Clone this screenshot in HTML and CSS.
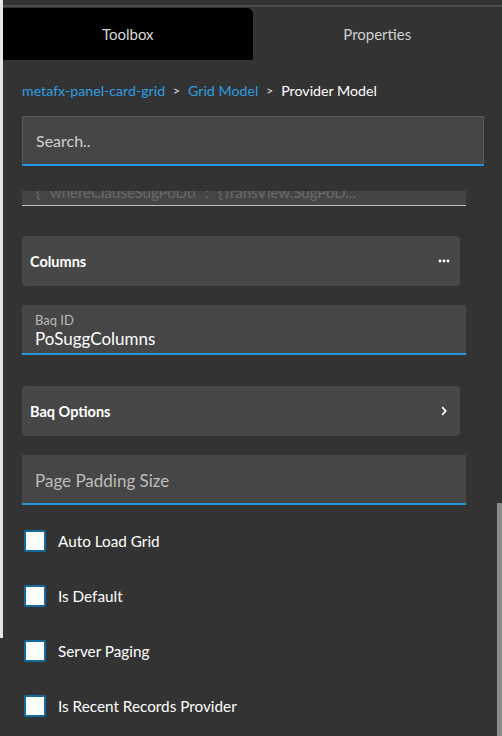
FILE: index.html
```html
<!DOCTYPE html>
<html>
<head>
<meta charset="utf-8">
<link rel="stylesheet" href="styles.css">
</head>
<body>
<div class="app">
  <div class="edge"><div class="edge-light"></div></div>
  <div class="panel">
    <div class="topline"></div>
    <div class="tabs">
      <div class="tab active">Toolbox</div>
      <div class="tab">Properties</div>
    </div>
    <div class="content">
      <div class="crumbs">
        <span class="link">metafx-panel-card-grid</span>
        <span class="sep">&gt;</span>
        <span class="link">Grid Model</span>
        <span class="sep">&gt;</span>
        <span class="current">Provider Model</span>
      </div>
      <div class="search">Search..</div>
      <div class="clipped"><div class="clipped-text">{ "whereClauseSugPoDtl" : "{TransView.SugPoD...</div></div>
      <div class="card"><span>Columns</span>
        <svg class="dots" width="12" height="4" viewBox="0 0 12 4"><circle cx="2" cy="2" r="1.4" fill="#fff"/><circle cx="6" cy="2" r="1.4" fill="#fff"/><circle cx="10" cy="2" r="1.4" fill="#fff"/></svg>
      </div>
      <div class="field">
        <div class="field-label">Baq ID</div>
        <div class="field-value">PoSuggColumns</div>
      </div>
      <div class="card card-2"><span>Baq Options</span>
        <svg class="chev" width="6" height="10" viewBox="0 0 6 10"><path d="M1.2 1.2 L4.6 5 L1.2 8.8" stroke="#fff" stroke-width="1.8" fill="none"/></svg>
      </div>
      <div class="field placeholder-field">Page Padding Size</div>
      <div class="checks">
        <div class="check"><span class="box"></span><span>Auto Load Grid</span></div>
        <div class="check"><span class="box"></span><span>Is Default</span></div>
        <div class="check"><span class="box"></span><span>Server Paging</span></div>
        <div class="check"><span class="box"></span><span>Is Recent Records Provider</span></div>
      </div>
    </div>
  </div>
  <div class="scrollbar"></div>
</div>
</body>
</html>
```

FILE: styles.css
```css
html, body {
  margin: 0;
  padding: 0;
  background: #333333;
}
body {
  font-family: Lato, "Liberation Sans", sans-serif;
  width: 502px;
  height: 736px;
  overflow: hidden;
}
.app {
  position: relative;
  display: flex;
  width: 502px;
  height: 736px;
}
.edge {
  width: 3px;
  flex: none;
  background: #333;
}
.edge-light {
  height: 638px;
  background: #e6e6e6;
}
.panel {
  flex: 1;
  display: flex;
  flex-direction: column;
  background: #333333;
}
.topline {
  height: 5px;
  border-bottom: 2px solid #4a4a4a;
  margin-bottom: 1px;
}
.tabs {
  display: flex;
  height: 52px;
}
.tab {
  flex: 1;
  display: flex;
  align-items: center;
  justify-content: center;
  color: #cfcfcf;
  font-size: 15px;
}
.tab.active {
  background: #000;
  color: #d8d8d8;
  border-top-right-radius: 6px;
}
.content {
  padding: 0 18px 0 19px;
  display: flex;
  flex-direction: column;
}
.crumbs {
  margin-top: 21px;
  height: 18px;
  display: flex;
  align-items: center;
  font-size: 14.2px;
  color: #fff;
}
.crumbs .link { color: #2e9ee2; }
.crumbs .sep { margin: 0 8px; color: #e0e0e0; font-size: 12px; }
.crumbs .current { color: #fff; }
.search {
  margin-top: 17px;
  height: 47px;
  background: #464646;
  border: 1px solid #5a5a5a;
  border-bottom: 2px solid #1b9ae0;
  color: #d0d0d0;
  font-size: 16px;
  padding-left: 13px;
  display: flex;
  align-items: center;
}
.clipped {
  margin-top: 25px;
  width: 444px;
  height: 14px;
  background: #454545;
  border-bottom: 1px solid #bdbdbd;
  overflow: hidden;
  color: #6a6a6a;
  font-size: 15px;
}
.clipped-text {
  margin-top: -9px;
  padding-left: 14px;
  line-height: 20px;
  white-space: nowrap;
}
.card {
  margin-top: 30px;
  width: 438px;
  height: 50px;
  box-sizing: border-box;
  background: #474747;
  border-radius: 4px;
  display: flex;
  align-items: center;
  justify-content: space-between;
  padding: 0 10px 0 8px;
  color: #fff;
  font-size: 14.5px;
  font-weight: bold;
}
.chev { margin-right: 3px; }
.field {
  margin-top: 19px;
  width: 444px;
  height: 50px;
  background: #464646;
  border-bottom: 2px solid #2596d6;
  padding-left: 13px;
  box-sizing: border-box;
  display: flex;
  flex-direction: column;
  justify-content: center;
}
.field-label {
  color: #b9b9b9;
  font-size: 13px;
  line-height: 16px;
  margin-top: 3px;
}
.field-value {
  color: #fff;
  font-size: 17px;
  line-height: 21px;
}
.card-2 { margin-top: 31px; }
.placeholder-field {
  margin-top: 19px;
  color: #bdbdbd;
  font-size: 17px;
  padding-top: 2px;
}
.checks {
  margin-top: 25px;
  display: flex;
  flex-direction: column;
  gap: 33px;
}
.check {
  display: flex;
  align-items: center;
  height: 22px;
  color: #fff;
  font-size: 15.3px;
  margin-left: 2px;
}
.box {
  width: 18px;
  height: 18px;
  background: #fff;
  border: 2px solid #14699e;
  border-radius: 2px;
  margin-right: 12px;
}
.scrollbar {
  position: absolute;
  right: 0;
  top: 503px;
  width: 5px;
  height: 233px;
  background: #8a8a8a;
}
```
